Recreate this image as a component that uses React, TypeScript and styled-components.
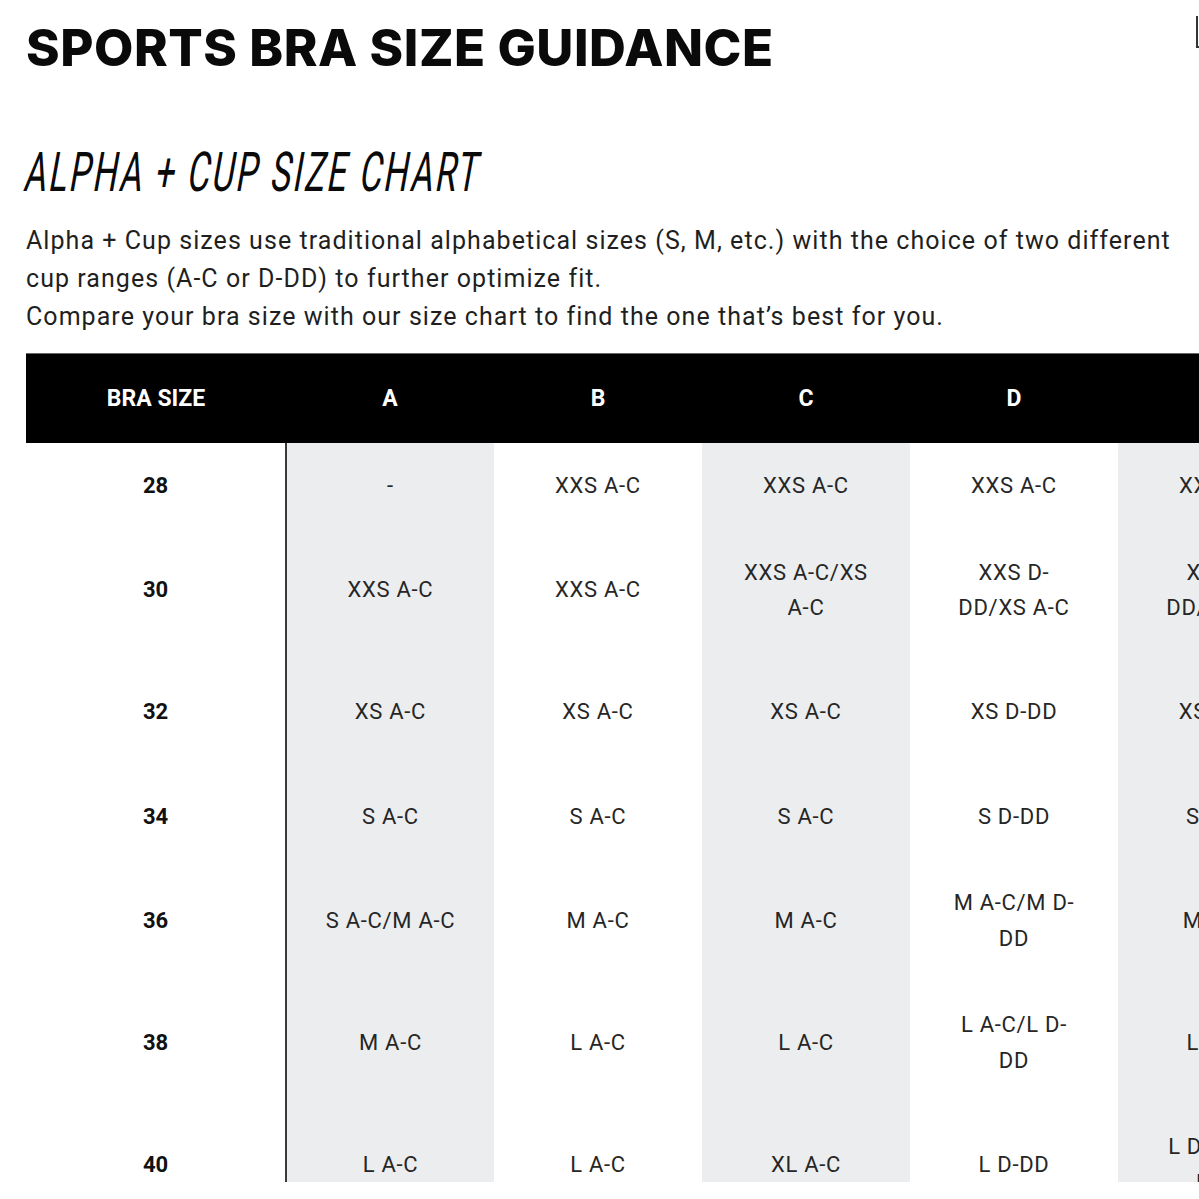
import React from "react";
import styled, { createGlobalStyle } from "styled-components";

const Global = createGlobalStyle`
  html, body { margin: 0; padding: 0; background: #fff; overflow: hidden; }
  body { font-family: Roboto, "Liberation Sans", sans-serif; color: #1a1a1a; }
`;

const Page = styled.div`
  width: 1199px;
  padding-left: 26px;
  box-sizing: border-box;
`;

const TopBar = styled.header`
  display: flex;
  justify-content: space-between;
  align-items: flex-start;
  padding-top: 21px;
  height: 74px;
  box-sizing: border-box;
`;

const Title = styled.h1`
  margin: 0;
  font-family: Inter, "Liberation Sans", sans-serif;
  font-weight: 800;
  font-size: 51px;
  line-height: 53px;
  letter-spacing: 0.55px;
  color: #0a0a0a;
`;

const CloseEdge = styled.span`
  width: 3px;
  height: 32px;
  margin-top: -5px;
  border-left: 2px solid #333;
  border-bottom: 2px solid #333;
  box-sizing: border-box;
`;

const Subtitle = styled.h2`
  margin: 70px 0 0 0;
  height: 56px;
  font-family: Roboto, "Liberation Sans", sans-serif;
  font-weight: 400;
  font-size: 55px;
  line-height: 56px;
  color: #0a0a0a;
  white-space: nowrap;
`;

const Condensed = styled.span`
  display: inline-block;
  transform-origin: left center;
  transform: skewX(-10deg) scaleX(0.62);
  letter-spacing: 3.6px;
`;

const Intro = styled.p`
  margin: 22px 0 0 0;
  font-family: Roboto, "Liberation Sans", sans-serif;
  font-size: 25px;
  line-height: 38px;
  letter-spacing: 1.05px;
  color: #1f1f1f;
  white-space: nowrap;
`;

const TableClip = styled.div`
  margin-top: 17px;
  height: 829px;
  overflow: hidden;
  width: 1700px;
`;

const Table = styled.table`
  table-layout: fixed;
  border-collapse: collapse;
  width: ${260 + 208 * 7}px;
  font-family: Roboto, "Liberation Sans", sans-serif;
`;

const HeadCell = styled.th<{ $first?: boolean }>`
  width: ${(p) => (p.$first ? 260 : 208)}px;
  height: 89px;
  padding: 0;
  background: #000;
  border-top: 1px solid #666;
  color: #fff;
  font-weight: 700;
  font-size: 23px;
  letter-spacing: 0px;
  text-align: center;
  vertical-align: middle;
`;

const SizeCell = styled.td`
  padding: 25px 8px 26px;
  text-align: center;
  vertical-align: middle;
  font-weight: 700;
  font-size: 22px;
  line-height: 35.25px;
  color: #111;
  border-right: 2px solid #3a3a3a;
`;

const Cell = styled.td<{ $shade: boolean }>`
  padding: 25px 8px 26px;
  text-align: center;
  vertical-align: middle;
  font-weight: 400;
  font-size: 22px;
  line-height: 35.5px;
  letter-spacing: 0.7px;
  color: #262626;
  white-space: pre-line;
  background: ${(p) => (p.$shade ? "#ecedef" : "#fff")};
`;

const cups = ["A", "B", "C", "D", "DD", "E", "F"];

const rows: { band: string; cells: string[] }[] = [
  { band: "28", cells: ["-", "XXS A-C", "XXS A-C", "XXS A-C", "XXS A-C", "XXS D-DD", "XXS D-DD"] },
  { band: "30", cells: ["XXS A-C", "XXS A-C", "XXS A-C/XS\nA-C", "XXS D-\nDD/XS A-C", "XXS D-\nDD/XS A-C", "XS D-DD", "XS D-DD"] },
  { band: "32", cells: ["XS A-C", "XS A-C", "XS A-C", "XS D-DD", "XS D-DD", "XS D-DD", "XS D-DD/S\nD-DD"] },
  { band: "34", cells: ["S A-C", "S A-C", "S A-C", "S D-DD", "S D-DD", "S D-DD", "M D-DD"] },
  { band: "36", cells: ["S A-C/M A-C", "M A-C", "M A-C", "M A-C/M D-\nDD", "M D-DD", "M D-DD", "L D-DD"] },
  { band: "38", cells: ["M A-C", "L A-C", "L A-C", "L A-C/L D-\nDD", "L D-DD", "L D-DD", "L D-DD"] },
  { band: "40", cells: ["L A-C", "L A-C", "XL A-C", "L D-DD", "L D-DD/XL\nD-DD", "XL D-DD", "XL D-DD"] },
];

export default function App() {
  return (
    <>
      <Global />
      <Page>
        <TopBar>
          <Title>SPORTS BRA SIZE GUIDANCE</Title>
          <CloseEdge />
        </TopBar>
        <Subtitle>
          <Condensed>ALPHA + CUP SIZE CHART</Condensed>
        </Subtitle>
        <Intro>
          Alpha + Cup sizes use traditional alphabetical sizes (S, M, etc.) with the choice of two different
          <br />
          cup ranges (A-C or D-DD) to further optimize fit.
          <br />
          Compare your bra size with our size chart to find the one that’s best for you.
        </Intro>
        <TableClip>
          <Table>
            <thead>
              <tr>
                <HeadCell $first>BRA SIZE</HeadCell>
                {cups.map((c) => (
                  <HeadCell key={c}>{c}</HeadCell>
                ))}
              </tr>
            </thead>
            <tbody>
              {rows.map((r) => (
                <tr key={r.band}>
                  <SizeCell>{r.band}</SizeCell>
                  {r.cells.map((v, i) => (
                    <Cell key={i} $shade={i % 2 === 0}>
                      {v}
                    </Cell>
                  ))}
                </tr>
              ))}
            </tbody>
          </Table>
        </TableClip>
      </Page>
    </>
  );
}
